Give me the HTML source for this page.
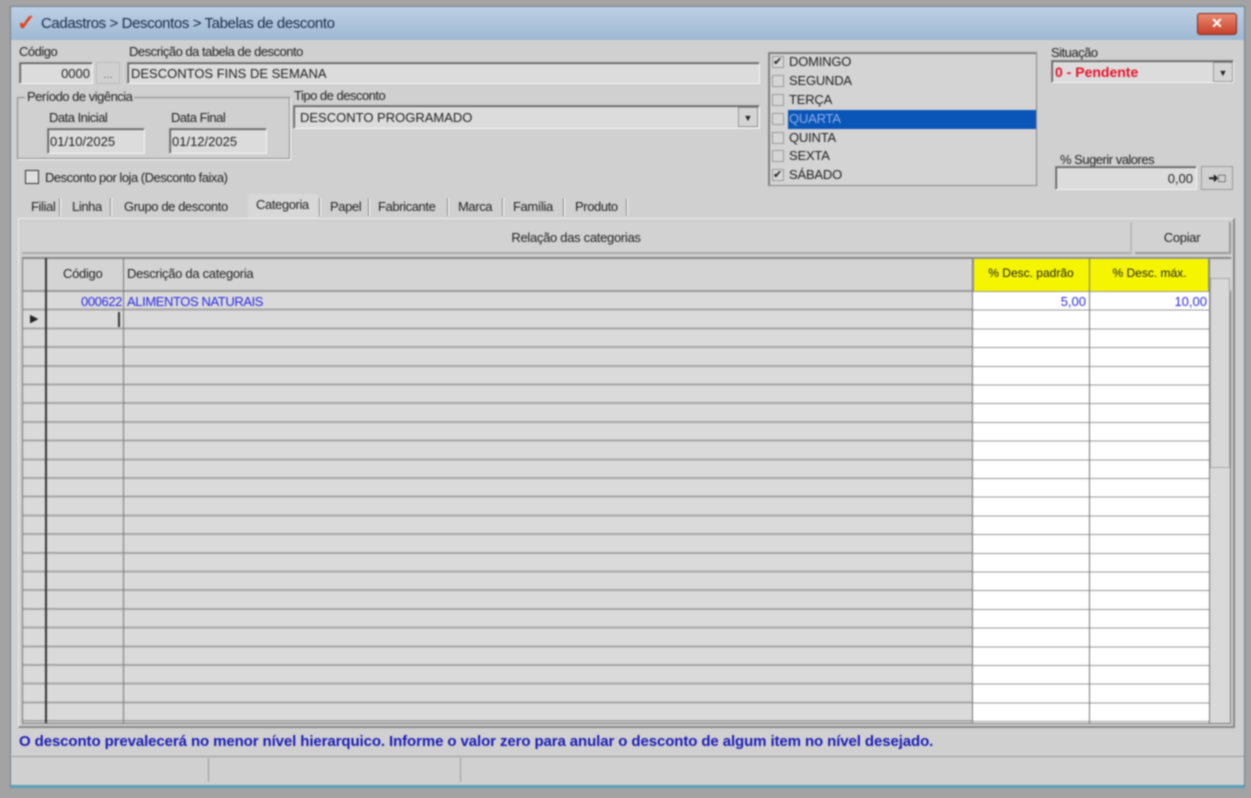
<!DOCTYPE html>
<html><head><meta charset="utf-8"><style>
*{box-sizing:border-box;margin:0;padding:0}
body{width:1251px;height:798px;background:#a3a3a3;font-family:"Liberation Sans",sans-serif;font-size:13px;color:#222;position:relative;overflow:hidden;filter:blur(0.8px)}
.a{position:absolute}
.win{left:10px;top:6px;width:1235px;height:782px;background:#d0d0d0;border:1px solid #6f7f8f;border-bottom:3px solid #5aa0b8}
.title{left:11px;top:7px;width:1233px;height:33px;background:linear-gradient(#bcd0e4,#9fb8d3)}
.inp{background:#dcdcdc;border:1px solid #8a8a8a;border-right-color:#f4f4f4;border-bottom-color:#f4f4f4;box-shadow:inset 1px 1px 0 #555}
.lbl{font-size:13px;letter-spacing:-0.5px}
.tab{top:196px;font-size:13px;letter-spacing:-0.4px;height:22px;line-height:22px}
.sep{top:198px;width:2px;height:18px;border-left:1px solid #888;border-right:1px solid #fff}
.cb{width:12px;height:12px;border:1px solid #9a9a9a;background:#d6d6d6}
.day{left:789px;font-size:13px;letter-spacing:-0.2px}
</style></head><body>
<div class="a win"></div>
<div class="a title"></div>
<div class="a" style="left:17px;top:10px;color:#e8401c;font-size:22px;font-weight:bold">✓</div>
<div class="a" style="left:41px;top:15px;font-size:15px;color:#1a2a4a;letter-spacing:-0.4px">Cadastros &gt; Descontos &gt; Tabelas de desconto</div>
<div class="a" style="left:1197px;top:13px;width:40px;height:22px;background:linear-gradient(#e88a70,#c8412a);border:1px solid #7a2a20;border-radius:3px;color:#fff;text-align:center;font-weight:bold;font-size:14px;line-height:19px">✕</div>

<div class="a lbl" style="left:19px;top:44px">Código</div>
<div class="a inp" style="left:19px;top:62px;width:74px;height:22px;text-align:right;padding:3px 2px;font-size:13px">0000</div>
<div class="a" style="left:96px;top:62px;width:24px;height:22px;background:#d0d0d0;border:1px solid #bbb;color:#666;text-align:center;font-size:11px;line-height:24px">...</div>
<div class="a lbl" style="left:129px;top:44px">Descrição da tabela de desconto</div>
<div class="a inp" style="left:127px;top:62px;width:633px;height:22px;padding:3px 3px;font-size:13px">DESCONTOS FINS DE SEMANA</div>

<div class="a" style="left:17px;top:97px;width:273px;height:62px;border:1px solid #888;box-shadow:1px 1px 0 #fff"></div>
<div class="a lbl" style="left:25px;top:89px;background:#d0d0d0;padding:0 2px">Período de vigência</div>
<div class="a lbl" style="left:49px;top:110px">Data Inicial</div>
<div class="a inp" style="left:47px;top:128px;width:98px;height:26px;padding:5px 2px">01/10/2025</div>
<div class="a lbl" style="left:171px;top:110px">Data Final</div>
<div class="a inp" style="left:169px;top:128px;width:98px;height:26px;padding:5px 2px">01/12/2025</div>

<div class="a lbl" style="left:294px;top:88px">Tipo de desconto</div>
<div class="a inp" style="left:293px;top:105px;width:467px;height:24px;padding:4px 6px">DESCONTO PROGRAMADO</div>
<div class="a" style="left:738px;top:107px;width:20px;height:20px;background:#d4d4d4;border:1px solid #999;font-size:9px;text-align:center;line-height:20px">▼</div>

<div class="a cb" style="left:25px;top:170px;width:14px;height:14px;border:1px solid #333;background:#e0e0e0"></div>
<div class="a lbl" style="left:45px;top:170px">Desconto por loja (Desconto faixa)</div>

<div class="a" style="left:768px;top:52px;width:269px;height:134px;border:1px solid #888;background:#d4d4d4;box-shadow:inset 1px 1px 0 #777"></div>
<div class="a" style="left:788px;top:110px;width:248px;height:19px;background:#0a55b8"></div>
<div class="a cb" style="left:772px;top:56px;font-size:11px;line-height:10px">✔</div><div class="a day" style="top:54px">DOMINGO</div>
<div class="a cb" style="left:772px;top:75px"></div><div class="a day" style="top:73px">SEGUNDA</div>
<div class="a cb" style="left:772px;top:94px"></div><div class="a day" style="top:92px">TERÇA</div>
<div class="a cb" style="left:772px;top:113px"></div><div class="a day" style="top:111px;color:#8fb0e8">QUARTA</div>
<div class="a cb" style="left:772px;top:132px"></div><div class="a day" style="top:130px">QUINTA</div>
<div class="a cb" style="left:772px;top:150px"></div><div class="a day" style="top:148px">SEXTA</div>
<div class="a cb" style="left:772px;top:169px;font-size:11px;line-height:10px">✔</div><div class="a day" style="top:167px">SÁBADO</div>

<div class="a lbl" style="left:1051px;top:45px">Situação</div>
<div class="a inp" style="left:1051px;top:60px;width:183px;height:23px;padding:3px 3px;color:#e8102a;font-weight:bold;font-size:14px">0 - Pendente</div>
<div class="a" style="left:1213px;top:62px;width:20px;height:20px;background:#d4d4d4;border:1px solid #999;font-size:9px;text-align:center;line-height:20px">▼</div>
<div class="a lbl" style="left:1060px;top:152px">% Sugerir valores</div>
<div class="a inp" style="left:1055px;top:166px;width:142px;height:24px;text-align:right;padding:4px 3px">0,00</div>
<div class="a" style="left:1201px;top:166px;width:32px;height:24px;background:#d0d0d0;border:1px solid #999;font-size:12px;font-weight:bold;text-align:center;line-height:22px">➜□</div>

<div class="a tab" style="left:31px">Filial</div><div class="a sep" style="left:59px"></div>
<div class="a tab" style="left:72px">Linha</div><div class="a sep" style="left:110px"></div>
<div class="a tab" style="left:124px">Grupo de desconto</div>
<div class="a" style="left:248px;top:194px;width:70px;height:24px;background:#d8d8d8"></div>
<div class="a tab" style="left:256px;top:194px">Categoria</div><div class="a sep" style="left:319px"></div>
<div class="a tab" style="left:330px">Papel</div><div class="a sep" style="left:368px"></div>
<div class="a tab" style="left:378px">Fabricante</div><div class="a sep" style="left:447px"></div>
<div class="a tab" style="left:458px">Marca</div><div class="a sep" style="left:502px"></div>
<div class="a tab" style="left:513px">Família</div><div class="a sep" style="left:563px"></div>
<div class="a tab" style="left:575px">Produto</div><div class="a sep" style="left:626px"></div>

<div class="a" style="left:18px;top:218px;width:1217px;height:510px;background:#d0d0d0;border:1px solid #eee;border-right:2px solid #888;border-bottom:2px solid #888"></div>
<div class="a" style="left:22px;top:222px;width:1110px;height:32px;background:#d2d2d2;border-bottom:2px solid #aaa;border-right:2px solid #bbb;text-align:center;line-height:32px;letter-spacing:-0.3px">Relação das categorias</div>
<div class="a" style="left:1135px;top:222px;width:96px;height:32px;background:#d2d2d2;border-right:2px solid #999;border-bottom:2px solid #999;text-align:center;line-height:32px;letter-spacing:-0.3px">Copiar</div>

<div class="a" style="left:22px;top:257px;width:1209px;height:467px;background:#d9d9d9;border:1px solid #777;border-top:2px solid #888"></div>
<div class="a" style="left:23px;top:292px;width:950px;height:431px;background:repeating-linear-gradient(#dadada 0 16.7px,#a6a6a6 16.7px 18.7px)"></div>
<div class="a" style="left:973px;top:292px;width:236px;height:431px;background:repeating-linear-gradient(#fff 0 17.7px,#999 17.7px 18.7px)"></div>
<div class="a" style="left:23px;top:259px;width:1208px;height:33px;background:#d4d4d4;border-bottom:2px solid #999"></div>
<div class="a" style="left:973px;top:258px;width:236px;height:34px;background:#f5f500;border:1px solid #999"></div>
<div class="a" style="left:45px;top:258px;width:2px;height:465px;background:#333"></div>
<div class="a" style="left:123px;top:258px;width:1px;height:465px;background:#777"></div>
<div class="a" style="left:972px;top:258px;width:1px;height:465px;background:#777"></div>
<div class="a" style="left:1089px;top:258px;width:1px;height:465px;background:#777"></div>
<div class="a" style="left:1209px;top:258px;width:1px;height:465px;background:#777"></div>
<div class="a" style="left:1210px;top:278px;width:20px;height:190px;background:#d8d8d8;border:1px solid #aaa"></div>
<div class="a" style="left:63px;top:266px;letter-spacing:-0.3px">Código</div>
<div class="a" style="left:127px;top:266px;letter-spacing:-0.3px">Descrição da categoria</div>
<div class="a" style="left:973px;top:266px;width:116px;text-align:center;font-size:12px">% Desc. padrão</div>
<div class="a" style="left:1090px;top:266px;width:119px;text-align:center;font-size:12px">% Desc. máx.</div>
<div class="a" style="left:48px;top:294px;width:74px;text-align:right;color:#2a2ae8;letter-spacing:-0.4px">000622</div>
<div class="a" style="left:127px;top:294px;color:#2a2ae8;letter-spacing:-0.4px">ALIMENTOS NATURAIS</div>
<div class="a" style="left:973px;top:294px;width:113px;text-align:right;color:#2a2ae8">5,00</div>
<div class="a" style="left:1090px;top:294px;width:117px;text-align:right;color:#2a2ae8">10,00</div>
<div class="a" style="left:30px;top:312px;font-size:11px">▶</div>
<div class="a" style="left:118px;top:312px;width:2px;height:15px;background:#333"></div>

<div class="a" style="left:19px;top:733px;color:#1a1ab8;font-weight:bold;font-size:15px;letter-spacing:-0.1px">O desconto prevalecerá no menor nível hierarquico. Informe o valor zero para anular o desconto de algum item no nível desejado.</div>
<div class="a" style="left:12px;top:756px;width:1232px;height:1px;background:#999"></div>
<div class="a" style="left:208px;top:758px;width:1px;height:24px;background:#999"></div>
<div class="a" style="left:460px;top:758px;width:1px;height:24px;background:#999"></div>
</body></html>
